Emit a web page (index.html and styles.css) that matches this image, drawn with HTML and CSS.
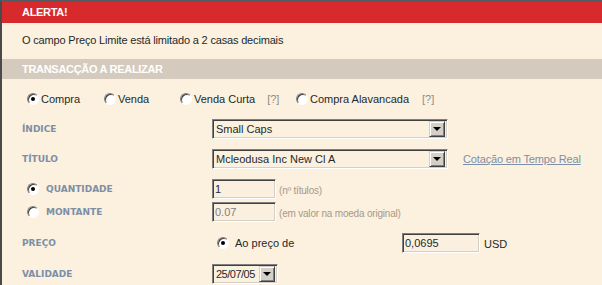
FILE: index.html
```html
<!DOCTYPE html>
<html>
<head>
  <link rel="stylesheet" href="styles.css">
</head>
<body>
  <div class="panel">
    <div class="bar bar-alert">ALERTA!</div>
    <p class="message">O campo Preço Limite está limitado a 2 casas decimais</p>

    <div class="bar bar-section">TRANSACÇÃO A REALIZAR</div>

    <div class="types">
      <div class="type"><span class="radio checked"></span>Compra</div>
      <div class="type"><span class="radio"></span>Venda</div>
      <div class="type"><span class="radio"></span>Venda Curta<span class="help">[?]</span></div>
      <div class="type"><span class="radio"></span>Compra Alavancada<span class="help help-wide">[?]</span></div>
    </div>

    <div class="row">
      <div class="label">ÍNDICE</div>
      <div class="dropdown wide"><span class="value">Small Caps</span><span class="arrow"></span></div>
    </div>

    <div class="row spaced">
      <div class="label">TÍTULO</div>
      <div class="dropdown wide"><span class="value">Mcleodusa Inc New Cl A</span><span class="arrow"></span></div>
      <a href="#" class="quote-link">Cotação em Tempo Real</a>
    </div>

    <div class="row spaced">
      <div class="label label-radio"><span class="radio checked"></span>QUANTIDADE</div>
      <input type="text" class="field small" value="1">
      <span class="hint">(nº títulos)</span>
    </div>

    <div class="row tight">
      <div class="label label-radio"><span class="radio"></span>MONTANTE</div>
      <input type="text" class="field small" value="0.07" disabled>
      <span class="hint">(em valor na moeda original)</span>
    </div>

    <div class="row loose">
      <div class="label">PREÇO</div>
      <div class="price-option"><span class="radio checked"></span>Ao preço de</div>
      <input type="text" class="field price" value="0,0695">
      <span class="currency">USD</span>
    </div>

    <div class="row loose">
      <div class="label">VALIDADE</div>
      <div class="dropdown date"><span class="value">25/07/05</span><span class="arrow"></span></div>
    </div>
  </div>
</body>
</html>
```

FILE: styles.css
```css
body {
  margin: 0;
  background-color: #fcf0df;
  font-family: "Liberation Sans", Arial, sans-serif;
  font-size: 11px;
  color: #1c2a2a;
}

.panel {
  min-height: 283px;
  border-top: 2px solid #525c62;
  border-left: 2px solid #4a4a4a;
  background-color: #fcf0df;
}

.bar {
  padding-left: 20px;
  color: #fff;
  font-weight: bold;
  letter-spacing: -0.3px;
}

.bar-alert {
  height: 21px;
  line-height: 21px;
  background-color: #d82a2c;
}

.bar-section {
  height: 20px;
  line-height: 20px;
  background-color: #d4cabe;
}

.message {
  margin: 0;
  height: 36px;
  line-height: 34px;
  padding-left: 20px;
  letter-spacing: -0.17px;
}

/* windows classic radio */
.radio {
  display: inline-block;
  box-sizing: border-box;
  width: 12px;
  height: 12px;
  border-radius: 50%;
  border: 1px solid;
  border-color: #808080 #fff #fff #808080;
  box-shadow: inset 1px 1px 0 #404040;
  background-color: #fff;
  position: relative;
  flex-shrink: 0;
}

.radio.checked::after {
  content: "";
  position: absolute;
  left: 3px;
  top: 3px;
  width: 4px;
  height: 4px;
  border-radius: 50%;
  background-color: #000;
}

.types {
  height: 40px;
  display: grid;
  grid-template-columns: 77px 76px 116px auto;
  align-items: center;
  padding-left: 25px;
}

.type {
  display: flex;
  align-items: center;
}

.type .radio {
  margin-right: 2px;
}

.help {
  color: #8c8c8c;
  margin-left: 12px;
}

.help-wide {
  margin-left: 13px;
}

.row {
  height: 20px;
  display: flex;
  align-items: center;
}

.row.spaced {
  margin-top: 10px;
}

.row.tight {
  margin-top: 3px;
}

.row.loose {
  margin-top: 11px;
}

.label {
  width: 210px;
  flex-shrink: 0;
  box-sizing: border-box;
  padding-left: 20px;
  font-family: "DejaVu Sans", Verdana, sans-serif;
  font-size: 9px;
  font-weight: bold;
  color: #7c8fa6;
  display: flex;
  align-items: center;
}

.label-radio {
  padding-left: 25px;
}

.label-radio .radio {
  margin-right: 7px;
}

.dropdown {
  box-sizing: border-box;
  height: 20px;
  display: flex;
  align-items: center;
  justify-content: space-between;
  border: 1px solid;
  border-color: #808080 #fff #fff #808080;
  box-shadow: inset 1px 1px 0 #404040, inset -1px -1px 0 #d4d0c8;
  padding: 1px 2px 1px 3px;
}

.dropdown.wide {
  width: 236px;
}

.dropdown.date {
  width: 66px;
}

.dropdown.date .value {
  letter-spacing: -0.5px;
}

.arrow {
  box-sizing: border-box;
  width: 16px;
  height: 16px;
  background-color: #d4d0c8;
  border: 1px solid;
  border-color: #d4d0c8 #404040 #404040 #d4d0c8;
  box-shadow: inset 1px 1px 0 #fff, inset -1px -1px 0 #808080;
  position: relative;
  flex-shrink: 0;
}

.arrow::after {
  content: "";
  position: absolute;
  left: 3px;
  top: 5px;
  border-left: 4px solid transparent;
  border-right: 4px solid transparent;
  border-top: 4px solid #000;
}

.quote-link {
  margin-left: 15px;
  color: #7c8fa6;
  text-decoration: underline;
  letter-spacing: -0.15px;
}

.field {
  box-sizing: border-box;
  height: 20px;
  margin: 0;
  padding: 1px 2px;
  border: 1px solid;
  border-color: #808080 #fff #fff #808080;
  box-shadow: inset 1px 1px 0 #404040, inset -1px -1px 0 #d4d0c8;
  background-color: #fbf0df;
  font-family: "Liberation Sans", Arial, sans-serif;
  font-size: 11px;
  color: #1c2a2a;
  outline: none;
}

.field:disabled {
  color: #808080;
}

.field.small {
  width: 64px;
}

.field.price {
  width: 78px;
}

.hint {
  margin-left: 3px;
  margin-top: 3px;
  font-size: 10px;
  letter-spacing: -0.2px;
  color: #a8998a;
}

.price-option {
  width: 185px;
  display: flex;
  align-items: center;
  margin-left: 5px;
}

.price-option .radio {
  margin-right: 6px;
}

.currency {
  margin-left: 4px;
  margin-top: 2px;
}
```
